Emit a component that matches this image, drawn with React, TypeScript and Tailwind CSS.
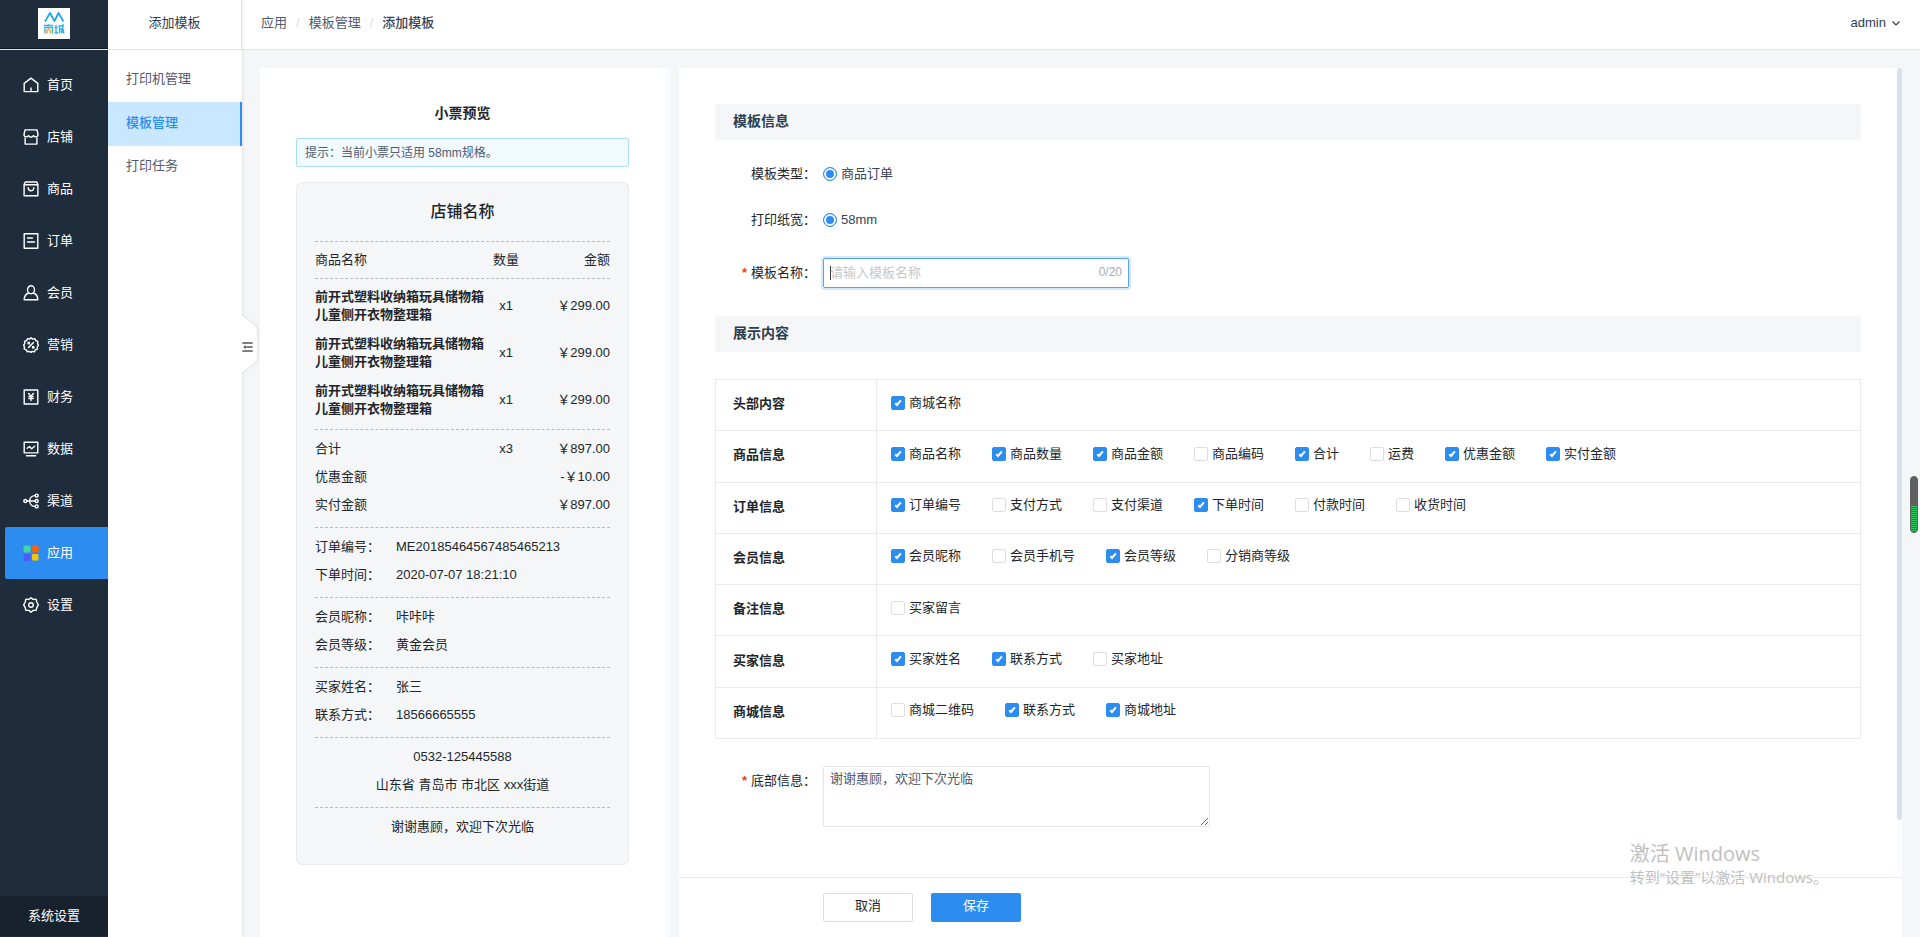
import { useState, type ReactNode } from "react";

type NavItem = { label: string; icon: ReactNode };

function LineIcon({ children }: { children: ReactNode }) {
  return (
    <svg
      viewBox="0 0 16 16"
      className="size-4 shrink-0"
      fill="none"
      stroke="currentColor"
      strokeWidth="1.4"
      strokeLinejoin="round"
      strokeLinecap="round"
      aria-hidden="true"
    >
      {children}
    </svg>
  );
}

const NAV: NavItem[] = [
  {
    label: "首页",
    icon: (
      <LineIcon>
        <path d="M1.2 14.6V6.4L8 1.1l6.8 5.3v8.2H1.2z" />
        <path d="M8 11v3.4" />
      </LineIcon>
    ),
  },
  {
    label: "店铺",
    icon: (
      <LineIcon>
        <path d="M2 .9h12l1 4.6c0 1.5-.8 2.4-2.1 2.4S10.700 7 10.500 6.600c-.3.800-1.300 1.600-2.500 1.600S5.800 7.400 5.500 6.600C5.300 7 4.400 7.900 3.100 7.900S1 7 1 5.500L2 .9z" />
        <path d="M2.100 9.200v5.900h11.800V9.200" />
      </LineIcon>
    ),
  },
  {
    label: "商品",
    icon: (
      <LineIcon>
        <path d="M2.200 1h11.600l1.100 2.600v11.200H1.100V3.600L2.200 1zM1.100 3.700h13.800" />
        <path d="M5.200 6.700c0 4.100 5.600 4.100 5.600 0" />
      </LineIcon>
    ),
  },
  {
    label: "订单",
    icon: (
      <LineIcon>
        <path d="M1.200.8h13.600v14.500H1.200zM4.500 5h5M4.500 9h7" />
      </LineIcon>
    ),
  },
  {
    label: "会员",
    icon: (
      <LineIcon>
        <ellipse cx="8" cy="4.800" rx="3.500" ry="4" />
        <path d="M5.600 8C3 8.900 1.200 11.400 1.200 14.700h13.600c0-3.300-1.800-5.800-4.400-6.700" />
      </LineIcon>
    ),
  },
  {
    label: "营销",
    icon: (
      <LineIcon>
        <path d="M8 .7l1.700 1.400 2.100-.5 1 2 2 .9-.2 2.100L15.500 8.300l-1.200 1.600.1 2.200-2 .8-1.100 2-2.100-.5L8 15.400l-1.700-1-2.100.4-1-2-2-.9.300-2.100L.6 8.100l1.200-1.600-.2-2.200 2-.8 1-1.900 2.100.4L8 .7z" />
        <path d="M10.500 5.400l-5 5.200" />
        <circle cx="5.800" cy="5.900" r=".8" />
        <circle cx="10.200" cy="10.200" r=".8" />
      </LineIcon>
    ),
  },
  {
    label: "财务",
    icon: (
      <LineIcon>
        <path d="M1.200 1h13.600v14H1.200z" />
        <path d="M5.700 4.500L8 7.500l2.300-3M8 7.500v4M5.900 7.700h4.200M5.900 9.600h4.200" />
      </LineIcon>
    ),
  },
  {
    label: "数据",
    icon: (
      <LineIcon>
        <path d="M1.200 1.200h13.600v10.700H1.200zM3.500 14.700h9" />
        <path d="M4.200 7.200l2.200-1.700 2.300 2.200 3-2.400" />
      </LineIcon>
    ),
  },
  {
    label: "渠道",
    icon: (
      <LineIcon>
        <circle cx="2.300" cy="8" r="1.500" />
        <circle cx="13.700" cy="2.600" r="1.500" />
        <circle cx="13.700" cy="8" r="1.500" />
        <circle cx="13.700" cy="13.400" r="1.500" />
        <path d="M3.800 8h8.400M12.200 2.600C4.800 2.600 4.800 13.400 12.200 13.400" />
      </LineIcon>
    ),
  },
  {
    label: "应用",
    icon: (
      <svg viewBox="0 0 16 16" className="size-4 shrink-0" aria-hidden="true">
        <rect x=".5" y=".5" width="7" height="7" rx="1" fill="#3fd6a5" />
        <circle cx="12.200" cy="4" r="3.700" fill="#ff6000" />
        <rect x=".5" y="9" width="7" height="7" rx="1" fill="#4a5cff" />
        <rect x="9" y="9" width="6.500" height="6.500" rx="1" fill="#f6c500" />
      </svg>
    ),
  },
  {
    label: "设置",
    icon: (
      <LineIcon>
        <path d="M8 .8l2.100 1.600 3-.1.700 2.700 1.500 2.900-1.500 2.800-.7 2.600-3 .1L8 15.200l-2.100-1.800-3-.1-.7-2.600L.7 7.900l1.500-2.900.7-2.700 3 .1L8 .8z" />
        <circle cx="8" cy="8" r="2.300" />
      </LineIcon>
    ),
  },
];

const SUBNAV = ["打印机管理", "模板管理", "打印任务"];

const GOODS = [1, 2, 3].map((id) => ({
  id,
  name: "前开式塑料收纳箱玩具储物箱儿童侧开衣物整理箱",
  qty: "x1",
  price: "￥299.00",
}));

type Option = { label: string; on: boolean };
const yes = (label: string): Option => ({ label, on: true });
const no = (label: string): Option => ({ label, on: false });

const SECTIONS: { title: string; options: Option[] }[] = [
  { title: "头部内容", options: [yes("商城名称")] },
  {
    title: "商品信息",
    options: [
      yes("商品名称"),
      yes("商品数量"),
      yes("商品金额"),
      no("商品编码"),
      yes("合计"),
      no("运费"),
      yes("优惠金额"),
      yes("实付金额"),
    ],
  },
  {
    title: "订单信息",
    options: [
      yes("订单编号"),
      no("支付方式"),
      no("支付渠道"),
      yes("下单时间"),
      no("付款时间"),
      no("收货时间"),
    ],
  },
  {
    title: "会员信息",
    options: [yes("会员昵称"), no("会员手机号"), yes("会员等级"), no("分销商等级")],
  },
  { title: "备注信息", options: [no("买家留言")] },
  { title: "买家信息", options: [yes("买家姓名"), yes("联系方式"), no("买家地址")] },
  { title: "商城信息", options: [no("商城二维码"), yes("联系方式"), yes("商城地址")] },
];

function Logo() {
  return (
    <svg viewBox="0 0 32 31" className="h-[31px] w-8" fill="none" role="img" aria-label="众商城">
      <rect width="32" height="31" fill="#fff" />
      <path
        d="M7 13.500l5-8.500 4.500 8 4-8 5 8.500"
        stroke="#19a6e6"
        strokeWidth="1.700"
        strokeLinejoin="round"
      />
      <path
        d="M6 17.500h9M10.500 16v1.500M7 25.500v-6h7.500v6M18 17v8M16.500 19.500h3M16.500 25h3.500M20.500 18h5.500M21.500 18v7.500M21.500 21h2v4M25 16l-.5 5 1.500 4.500M24 25l2-4"
        stroke="#35b3ea"
        strokeWidth="1.400"
      />
      <path d="M9 25.500v-3l1.700-1.500 1.700 1.500v3" stroke="#f5a32e" strokeWidth="1.500" />
    </svg>
  );
}

function Sidebar() {
  return (
    <aside className="flex w-[108px] shrink-0 flex-col bg-[#1e2c3c] text-white">
      <div className="flex h-[50px] items-start justify-center border-b border-[#e0e3e6] pt-2 shadow-[inset_0_-1px_0_#101820]">
        <Logo />
      </div>
      <nav className="flex flex-col pt-[9px]">
        {NAV.map((item) => (
          <a
            key={item.label}
            href="#"
            className={
              item.label === "应用"
                ? "ml-[5px] flex h-[52px] items-center gap-2 rounded-l-xs bg-[#2d8cf0] pl-[18px]"
                : "ml-[5px] flex h-[52px] items-center gap-2 pl-[18px]"
            }
          >
            {item.icon}
            <span>{item.label}</span>
          </a>
        ))}
      </nav>
      <button
        type="button"
        className="mt-auto mb-px h-10 rounded-xs bg-[#17222e] text-[13px]"
      >
        系统设置
      </button>
    </aside>
  );
}

function SubMenu() {
  return (
    <aside className="relative flex w-[134px] shrink-0 flex-col bg-white shadow-[1px_0_3px_rgba(0,0,0,0.08)]">
      <div className="flex h-[50px] items-center justify-center border-r border-b border-[#dfe3e8] pb-1 text-[#2c3e50]">
        添加模板
      </div>
      <nav className="flex flex-col pt-[9px] text-[#515a6e]">
        {SUBNAV.map((label) => (
          <a
            key={label}
            href="#"
            className={
              label === "模板管理"
                ? "flex h-11 items-center border-r-2 border-[#2d8cf0] bg-[#c9e8ff] pb-[2px] pl-[18px] font-medium text-[#2d8cf0]"
                : "flex h-[43px] items-center pb-[3px] pl-[18px]"
            }
          >
            {label}
          </a>
        ))}
      </nav>
      <button
        type="button"
        aria-label="收起菜单"
        className="absolute top-[315px] left-full z-10 h-[58px] w-4"
      >
        <svg viewBox="0 0 16 58" className="h-[58px] w-4 overflow-visible" aria-hidden="true">
          <path
            d="M-1 0L12 10q3 2 3 5v28q0 3-3 5L-1 58z"
            fill="#fff"
            className="drop-shadow-[1px_0_1px_rgba(0,0,0,0.1)]"
          />
          <path
            d="M1 28h9M5 32h5M1 36h9"
            stroke="#555"
            strokeWidth="1.700"
            strokeLinecap="round"
          />
          <path d="M4 30.300v3.400L1 32z" fill="#555" />
        </svg>
      </button>
    </aside>
  );
}

function TopBar() {
  return (
    <header className="flex h-[50px] shrink-0 items-center justify-between border-b border-[#e4e7eb] bg-white pr-5 pb-1 pl-[19px] text-[#515a6e]">
      <nav aria-label="面包屑" className="flex items-center gap-[9px]">
        <a href="#">应用</a>
        <span className="text-[#dcdee2]">/</span>
        <a href="#">模板管理</a>
        <span className="text-[#dcdee2]">/</span>
        <span className="font-medium text-[#3a4356]">添加模板</span>
      </nav>
      <button type="button" className="flex items-center gap-[6px] text-[#2c3e50]">
        admin
        <svg viewBox="0 0 8 8" className="size-2" fill="none" stroke="currentColor" aria-hidden="true">
          <path d="M.5 2.500L4 6l3.500-3.500" strokeWidth="1.200" />
        </svg>
      </button>
    </header>
  );
}

function Group({ children }: { children: ReactNode }) {
  return (
    <div className="border-t border-dashed border-[#b8babd] pt-[5px] pb-2 leading-7">{children}</div>
  );
}

function SumRow({ label, qty, amount }: { label: string; qty?: string; amount: string }) {
  return (
    <div className="grid grid-cols-[172px_38px_1fr]">
      <span>{label}</span>
      <span className="text-center">{qty}</span>
      <span className="text-right">{amount}</span>
    </div>
  );
}

function Pair({ label, value }: { label: string; value: string }) {
  return (
    <div className="flex">
      <span className="w-[81px] shrink-0">{label}：</span>
      <span>{value}</span>
    </div>
  );
}

function Preview({ thanks }: { thanks: string }) {
  return (
    <section className="w-[410px] shrink-0 border-r-[5px] border-[#fafbfe] bg-white px-9 pt-9 pb-9 text-[#22262b]">
      <div className="w-[333px]">
        <h2 className="text-center text-sm leading-[18px] font-bold">小票预览</h2>
        <p className="mt-4 flex h-[29px] items-center rounded-xs border border-[#abdcff] bg-[#f0faff] pl-2 text-xs text-[#515a6e]">
          提示：当前小票只适用 58mm规格。
        </p>
        <div className="mt-[15px] h-[683px] rounded-md border border-[#e8eaec] bg-[#f4f6f8] px-[18px]">
          <h3 className="flex h-[58px] items-center justify-center text-base font-medium">
            店铺名称
          </h3>
          <table className="block w-full">
            <thead className="block">
              <tr className="grid grid-cols-[172px_38px_1fr] border-y border-dashed border-[#b8babd] leading-9">
                <th className="text-left font-normal">商品名称</th>
                <th className="text-center font-normal">数量</th>
                <th className="text-right font-normal">金额</th>
              </tr>
            </thead>
            <tbody className="block pt-[3px] pb-[6px]">
              {GOODS.map((g) => (
                <tr
                  key={g.id}
                  className="grid h-[47px] grid-cols-[172px_38px_1fr] items-center leading-[18px]"
                >
                  <td className="font-bold">{g.name}</td>
                  <td className="text-center">{g.qty}</td>
                  <td className="text-right">{g.price}</td>
                </tr>
              ))}
            </tbody>
          </table>
          <Group>
            <SumRow label="合计" qty="x3" amount="￥897.00" />
            <SumRow label="优惠金额" amount="-￥10.00" />
            <SumRow label="实付金额" amount="￥897.00" />
          </Group>
          <Group>
            <Pair label="订单编号" value="ME20185464567485465213" />
            <Pair label="下单时间" value="2020-07-07 18:21:10" />
          </Group>
          <Group>
            <Pair label="会员昵称" value="咔咔咔" />
            <Pair label="会员等级" value="黄金会员" />
          </Group>
          <Group>
            <Pair label="买家姓名" value="张三" />
            <Pair label="联系方式" value="18566665555" />
          </Group>
          <Group>
            <p className="text-center">0532-125445588</p>
            <p className="text-center">山东省 青岛市 市北区 xxx街道</p>
          </Group>
          <Group>
            <p className="text-center">{thanks}</p>
          </Group>
        </div>
      </div>
    </section>
  );
}

function SectionTitle({ children }: { children: ReactNode }) {
  return (
    <h2 className="flex h-9 items-center rounded-xs bg-[#f5f6f8] pb-[2px] pl-[18px] text-sm font-bold text-[#2c3e50]">
      {children}
    </h2>
  );
}

function FieldLabel({
  children,
  htmlFor,
  required,
}: {
  children: ReactNode;
  htmlFor: string;
  required?: boolean;
}) {
  return (
    <label htmlFor={htmlFor} className="w-[101px] shrink-0 text-right text-[#22262b]">
      {required && <span className="mr-1 font-bold text-[#ed4014]">*</span>}
      {children}：
    </label>
  );
}

function Radio({ id, name, label }: { id: string; name: string; label: string }) {
  return (
    <label className="flex items-center gap-1 text-[#3a4356]">
      <input
        id={id}
        type="radio"
        name={name}
        defaultChecked
        className="size-[14px] appearance-none rounded-full border border-[#2d8cf0] bg-[#2d8cf0] shadow-[inset_0_0_0_2px_#fff]"
      />
      {label}
    </label>
  );
}

function Check({ option }: { option: Option }) {
  return (
    <label className="flex items-center gap-1">
      <span className="relative flex">
        <input
          type="checkbox"
          defaultChecked={option.on}
          className="peer size-[14px] appearance-none rounded-xs border border-[#dcdee2] bg-white checked:border-[#2d8cf0] checked:bg-[#2d8cf0]"
        />
        <svg
          viewBox="0 0 14 14"
          className="pointer-events-none absolute inset-0 hidden size-[14px] peer-checked:block"
          fill="none"
          stroke="#fff"
          strokeWidth="2"
          aria-hidden="true"
        >
          <path d="M4.300 7.200l1.700 1.800 3.900-4.600" />
        </svg>
      </span>
      {option.label}
    </label>
  );
}

function TemplateForm({
  thanks,
  onThanks,
}: {
  thanks: string;
  onThanks: (value: string) => void;
}) {
  const [name, setName] = useState("");

  return (
    <form
      className="flex min-w-0 flex-1 flex-col bg-white"
      onSubmit={(e) => e.preventDefault()}
    >
      <div className="relative flex-1 pt-9 pr-[41px] pb-12 pl-9">
        <SectionTitle>模板信息</SectionTitle>
        <div className="mt-6 flex h-5 items-center gap-[7px]">
          <FieldLabel htmlFor="type">模板类型</FieldLabel>
          <Radio id="type" name="type" label="商品订单" />
        </div>
        <div className="mt-[26px] flex h-5 items-center gap-[7px]">
          <FieldLabel htmlFor="paper">打印纸宽</FieldLabel>
          <Radio id="paper" name="paper" label="58mm" />
        </div>
        <div className="mt-7 flex items-center gap-[7px]">
          <FieldLabel htmlFor="name" required>
            模板名称
          </FieldLabel>
          <div className="relative w-[306px]">
            <input
              id="name"
              type="text"
              maxLength={20}
              value={name}
              onChange={(e) => setName(e.target.value)}
              placeholder="请输入模板名称"
              className="block h-[30px] w-full rounded-xs border border-[#57a3f3] pr-12 pb-[2px] pl-[6px] text-[#515a6e] shadow-[0_0_0_2px_rgba(45,140,240,0.2)] outline-none placeholder:text-[#c5c8ce]"
            />
            {name === "" && (
              <span className="absolute top-2 left-[7px] h-[14px] w-px bg-[#333a48]" />
            )}
            <span className="absolute top-[6px] right-[7px] text-xs leading-4 text-[#a9abb0]">
              {name.length}/20
            </span>
          </div>
        </div>
        <div className="mt-7">
          <SectionTitle>展示内容</SectionTitle>
        </div>
        <table className="mt-[27px] h-[360px] w-full border-collapse text-[#22262b]">
          <tbody>
            {SECTIONS.map((s) => (
              <tr key={s.title}>
                <th className="w-[161px] border border-[#e8eaec] pb-[2px] pl-[17px] text-left font-bold">
                  {s.title}
                </th>
                <td className="border border-[#e8eaec] pb-[5px] pl-[14px]">
                  <div className="flex flex-wrap gap-x-[31px]">
                    {s.options.map((o) => (
                      <Check key={o.label} option={o} />
                    ))}
                  </div>
                </td>
              </tr>
            ))}
          </tbody>
        </table>
        <div className="mt-[27px] flex items-start gap-[7px]">
          <div className="flex pt-[5px]">
            <FieldLabel htmlFor="footer" required>
              底部信息
            </FieldLabel>
          </div>
          <textarea
            id="footer"
            value={thanks}
            onChange={(e) => onThanks(e.target.value)}
            className="block h-[61px] w-[387px] resize rounded-xs border border-[#e4e6ea] px-[6px] py-[2px] leading-5 text-[#515a6e] outline-none"
          />
        </div>
        <div className="absolute inset-y-0 right-0 w-[5px] bg-[#fafcff]">
          <div className="h-[93%] w-[5px] rounded-full bg-[#d9e1ef]" />
        </div>
      </div>
      <div className="flex h-[60px] shrink-0 items-start gap-[18px] border-t border-[#e8eaec] pt-[15px] pl-36">
        <button
          type="button"
          className="h-[29px] w-[90px] rounded-xs border border-[#dcdee2] bg-white pb-[3px] text-[#22262b]"
        >
          取消
        </button>
        <button
          type="submit"
          className="h-[29px] w-[90px] rounded-xs bg-[#2d8cf0] pb-[3px] text-white"
        >
          保存
        </button>
      </div>
    </form>
  );
}

export default function App() {
  const [thanks, setThanks] = useState("谢谢惠顾，欢迎下次光临");

  return (
    <div className="relative flex min-h-screen bg-[#f4f6f8] font-['Liberation_Sans','Noto_Sans_CJK_SC',sans-serif] text-[13px] leading-5">
      <Sidebar />
      <SubMenu />
      <div className="flex min-w-0 flex-1 flex-col">
        <TopBar />
        <main className="flex flex-1 gap-[9px] pt-[18px] pr-[18px] pl-[18px]">
          <Preview thanks={thanks} />
          <TemplateForm thanks={thanks} onThanks={setThanks} />
        </main>
      </div>
      <div className="pointer-events-none absolute right-[92px] bottom-[49px] font-['Open_Sans','Noto_Sans_CJK_SC',sans-serif] text-[#c0c0c0]">
        <p className="text-xl leading-6">激活 Windows</p>
        <p className="text-[15px] leading-[22px]">转到“设置”以激活 Windows。</p>
      </div>
      <div className="absolute top-[476px] right-[2px] flex h-[57px] w-2 flex-col justify-end overflow-hidden rounded-full border border-[#5f5f5f] bg-[#5f5f5f]">
        <div className="h-[26px] bg-[repeating-linear-gradient(to_bottom,#2fc45c_0px,#2fc45c_1px,#5f5f5f_1px,#5f5f5f_2px)]" />
      </div>
    </div>
  );
}
